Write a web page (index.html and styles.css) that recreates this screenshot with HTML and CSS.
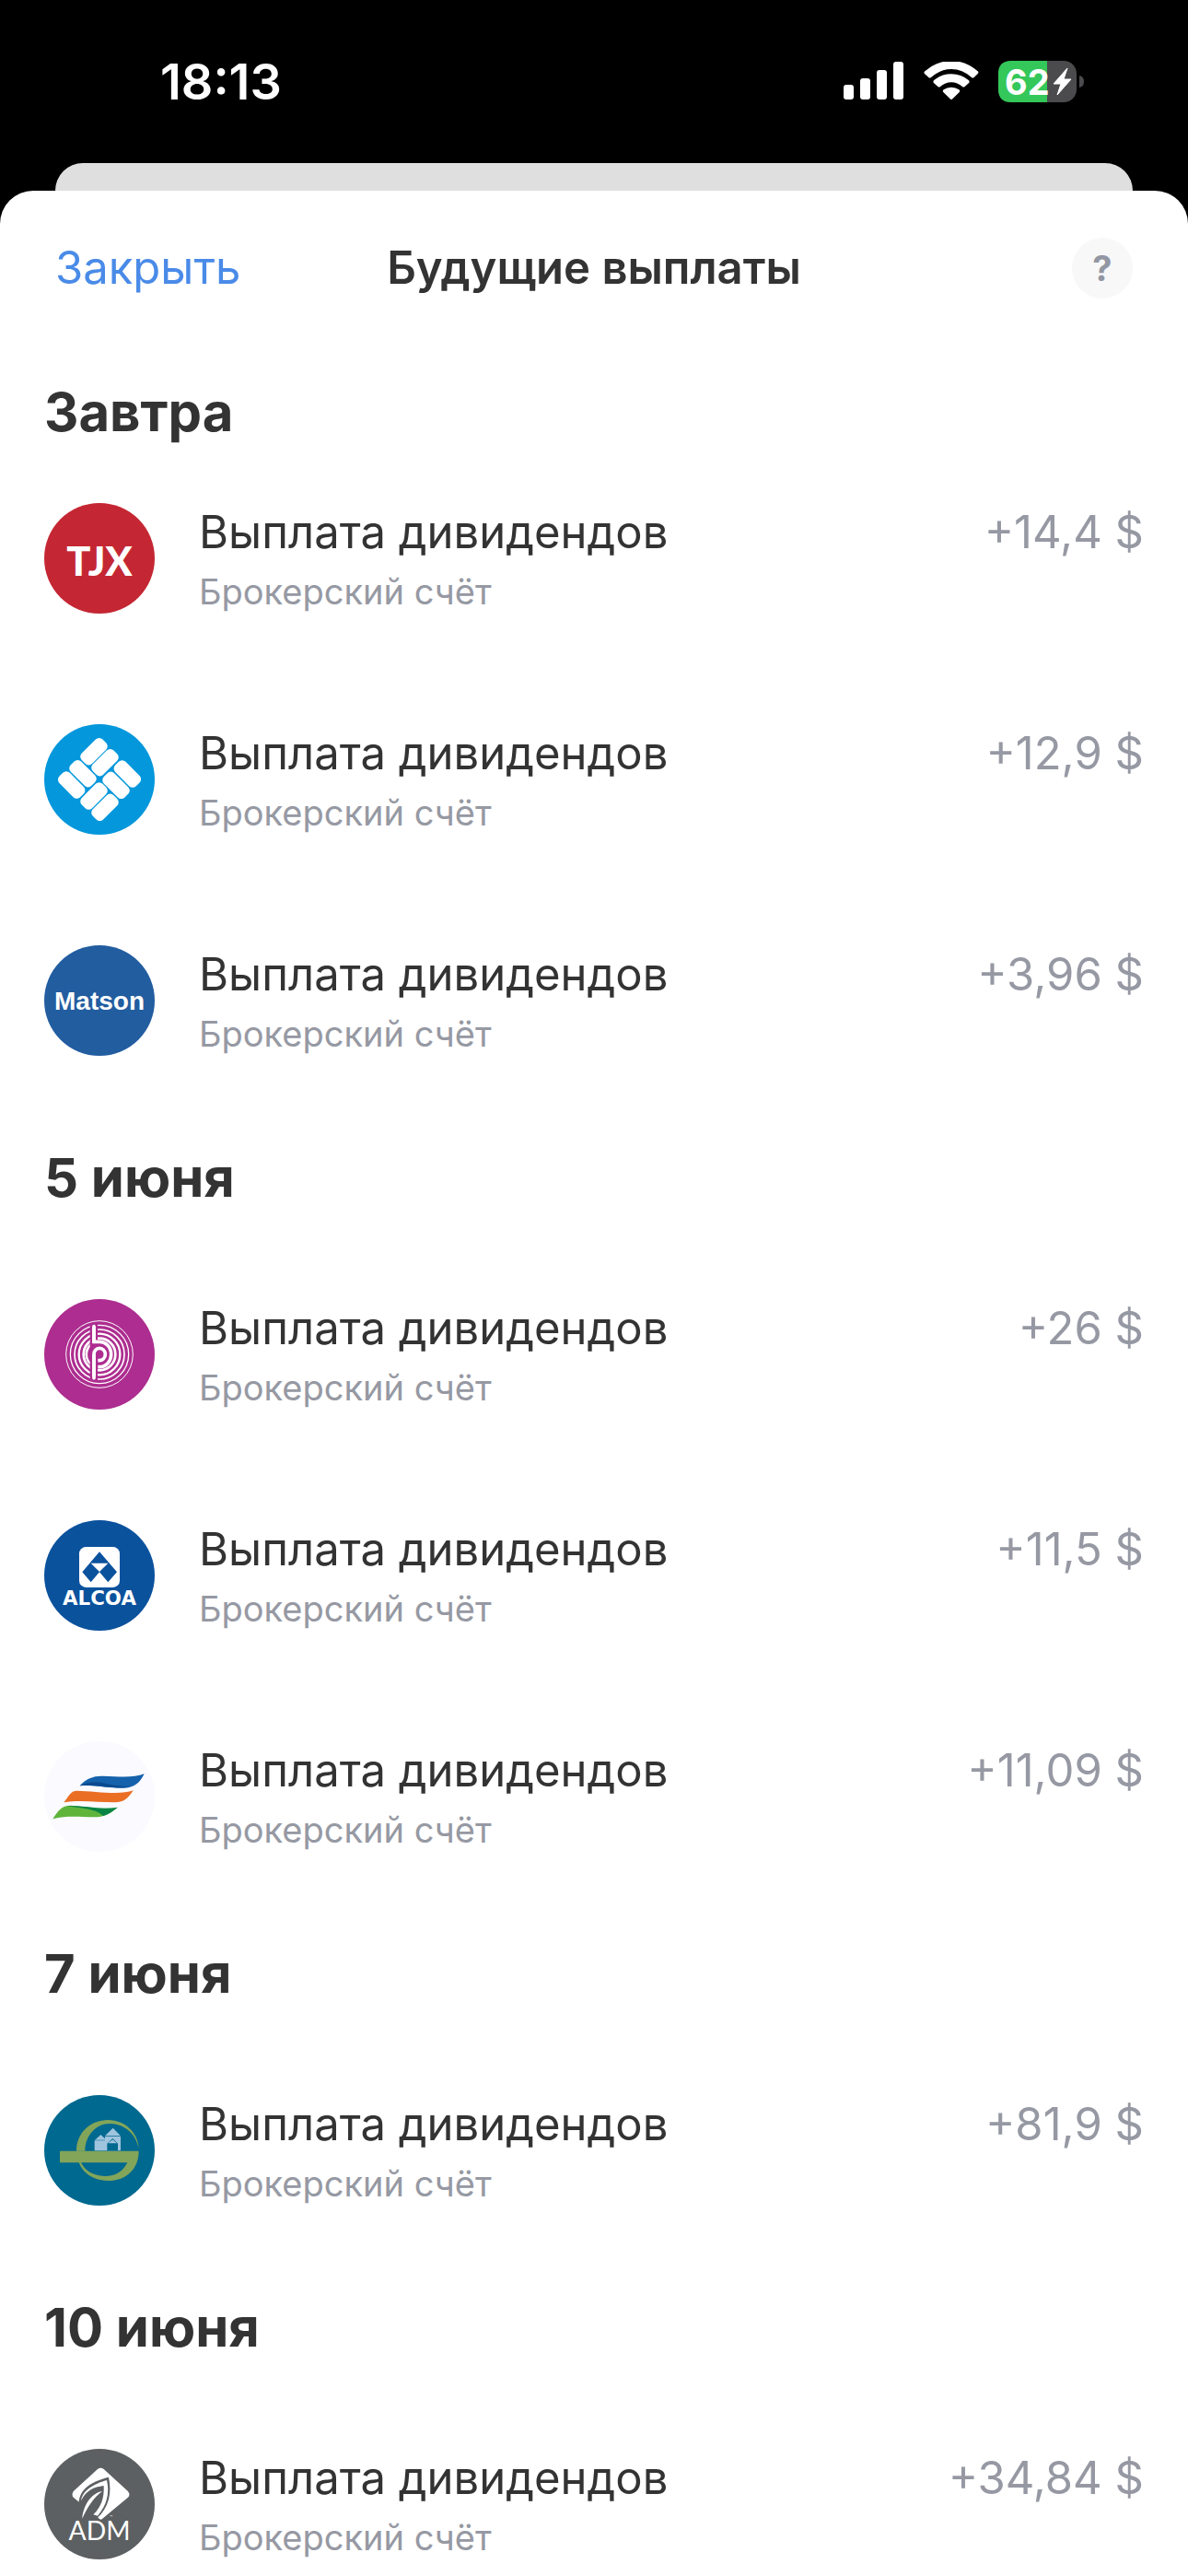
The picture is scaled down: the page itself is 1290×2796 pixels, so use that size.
FILE: index.html
```
<!DOCTYPE html>
<html lang="ru">

<head>
    <meta charset="UTF-8">
    <meta name="viewport" content="width=device-width, initial-scale=1.0">
    <title>Будущие выплаты</title>
    <link rel="stylesheet" href="styles.css">
</head>

<body>
    <div class="status">
        <span class="time">18:13</span>
        <div class="indicators">
            <svg width="66" height="44" viewBox="0 0 66 44" fill="#fff">
                <rect x="0" y="25" width="11" height="16" rx="3" />
                <rect x="18" y="18" width="11" height="23" rx="3" />
                <rect x="36" y="9" width="11" height="32" rx="3" />
                <rect x="54" y="0" width="11" height="41" rx="3" />
            </svg>
            <svg width="60" height="44" viewBox="0 0 180 132" fill="#fff">
                <path d="M2 38Q0 34 4 31Q43 -3 90 -3Q137 -3 176 31Q180 34 177 38L164 51Q160 54 156 51Q126 24 90 24Q54 24 24 51Q19 54 16 51Z" />
                <path d="M32 68Q30 64 33 61Q58 40 90 40Q122 40 147 61Q150 64 148 68L134 81Q130 84 126 81Q110 67 90 67Q70 67 54 81Q50 84 46 81Z" />
                <path d="M63 98Q61 94 65 91Q76 83 90 83Q104 83 115 91Q119 94 117 98L94 121Q90 125 86 121Z" />
            </svg>
            <svg width="94" height="46" viewBox="0 0 94 46">
                <rect width="85" height="45" rx="14" fill="#4b4b4d" />
                <path d="M14 0H53V45H14Q0 45 0 31V14Q0 0 14 0Z" fill="#34c759" />
                <path d="M88 16Q93 17 93 22.500Q93 28 88 29Z" fill="#4b4b4d" />
                <text x="7" y="37" class="charge">62</text>
                <path d="M75 8L60 25H68L64 37L79 20H71Z" fill="#fff" stroke="#fff" stroke-linejoin="round" />
            </svg>
        </div>
    </div>
    <div class="behind"></div>

    <div class="sheet">
        <header class="toolbar">
            <button class="close">Закрыть</button>
            <h1>Будущие выплаты</h1>
            <button class="help">?</button>
        </header>

        <section>
            <h2 class="first">Завтра</h2>
            <div class="row">
                <svg class="logo" viewBox="54 48 360 360">
                    <circle cx="234" cy="228" r="180" fill="#c42733" />
                    <text x="234" y="285" class="tjx">TJX</text>
                </svg>
                <div class="info">
                    <p class="name">Выплата дивидендов</p>
                    <p class="account">Брокерский счёт</p>
                </div>
                <span class="amount">+14,4 $</span>
            </div>
            <div class="row">
                <svg class="logo" viewBox="54 48 360 360">
                    <circle cx="234" cy="228" r="180" fill="#0497dc" />
                    <g fill="#fff">
                        <rect x="-48" y="-24" width="96" height="48" rx="16" transform="translate(216 137) rotate(-45)" />
                        <rect x="-48" y="-24" width="96" height="48" rx="16" transform="translate(252 173) rotate(-45)" />
                        <rect x="-48" y="-24" width="96" height="48" rx="16" transform="translate(180 209) rotate(45)" />
                        <rect x="-48" y="-24" width="96" height="48" rx="16" transform="translate(143 246) rotate(45)" />
                        <rect x="-48" y="-24" width="96" height="48" rx="16" transform="translate(325 210) rotate(45)" />
                        <rect x="-48" y="-24" width="96" height="48" rx="16" transform="translate(288 247) rotate(45)" />
                        <rect x="-48" y="-24" width="96" height="48" rx="16" transform="translate(216 282) rotate(-45)" />
                        <rect x="-48" y="-24" width="96" height="48" rx="16" transform="translate(252 319) rotate(-45)" />
                    </g>
                </svg>
                <div class="info">
                    <p class="name">Выплата дивидендов</p>
                    <p class="account">Брокерский счёт</p>
                </div>
                <span class="amount">+12,9 $</span>
            </div>
            <div class="row">
                <svg class="logo" viewBox="54 48 360 360">
                    <circle cx="234" cy="228" r="180" fill="#225da0" />
                    <text x="234" y="259" class="matson">Matson</text>
                </svg>
                <div class="info">
                    <p class="name">Выплата дивидендов</p>
                    <p class="account">Брокерский счёт</p>
                </div>
                <span class="amount">+3,96 $</span>
            </div>
        </section>

        <section>
            <h2>5 июня</h2>
            <div class="row">
                <svg class="logo" viewBox="54 45 360 360">
                    <circle cx="234" cy="225" r="180" fill="#ad2d90" />
                    <g fill="none" stroke="#fff">
                        <circle cx="234" cy="225" r="95" stroke-width="4" />
                        <circle cx="234" cy="225" r="81" stroke-width="5" />
                        <circle cx="234" cy="225" r="67" stroke-width="7" />
                        <circle cx="234" cy="225" r="52" stroke-width="8" />
                        <path d="M216 188A40 40 0 0 0 216 262" stroke-width="8" />
                    </g>
                    <rect x="203" y="125" width="25" height="184" fill="#ad2d90" />
                    <g fill="none" stroke="#fff">
                        <circle cx="234" cy="225" r="109" stroke-width="3" />
                        <path d="M216 136V184H234A38 41 0 0 1 234 266H229" stroke-width="11" />
                        <path d="M216 298V225A18 20 0 0 1 234 205A19 20 0 0 1 234 245H229" stroke-width="11" />
                        <path d="M216 134V184M216 228V302" stroke-width="11" stroke-linecap="round" />
                    </g>
                </svg>
                <div class="info">
                    <p class="name">Выплата дивидендов</p>
                    <p class="account">Брокерский счёт</p>
                </div>
                <span class="amount">+26 $</span>
            </div>
            <div class="row">
                <svg class="logo" viewBox="54 45 360 360">
                    <circle cx="234" cy="225" r="180" fill="#0b529d" />
                    <rect x="168" y="132" width="132" height="132" rx="22" fill="#fff" />
                    <path d="M234 148L291 214L262 247L234 214L206 247L178 214Z" fill="#0b529d" />
                    <path d="M206 185H262L234 213Z" fill="#fff" />
                    <text x="234" y="320" class="alcoa">ALCOA</text>
                </svg>
                <div class="info">
                    <p class="name">Выплата дивидендов</p>
                    <p class="account">Брокерский счёт</p>
                </div>
                <span class="amount">+11,5 $</span>
            </div>
            <div class="row">
                <svg class="logo" viewBox="54 45 360 360">
                    <circle cx="234" cy="225" r="180" fill="#fafaff" />
                    <path d="M170 190C190 166 215 157 245 158C300 160 345 165 380 151C365 180 350 195 315 197C270 199 215 185 170 190Z" fill="#1561ab" />
                    <path d="M170 190C200 174 230 176 260 184C285 190 310 192 335 193C290 203 225 185 170 190Z" fill="#0a4a8f" />
                    <path d="M118 244C135 222 140 207 160 206C220 207 300 222 344 205C325 235 310 243 285 244C230 244 170 235 118 244Z" fill="#ea6f25" />
                    <path d="M82 298C100 270 110 255 140 254C190 256 240 270 293 260C270 280 250 292 215 292C170 292 130 285 82 298Z" fill="#5fb53c" />
                    <path d="M125 256C190 252 240 270 293 260C275 275 262 283 245 288C225 265 170 262 125 256Z" fill="#0a8444" />
                </svg>
                <div class="info">
                    <p class="name">Выплата дивидендов</p>
                    <p class="account">Брокерский счёт</p>
                </div>
                <span class="amount">+11,09 $</span>
            </div>
        </section>

        <section>
            <h2>7 июня</h2>
            <div class="row">
                <svg class="logo" viewBox="54 42 360 360">
                    <circle cx="234" cy="222" r="180" fill="#00698f" />
                    <g fill="#82a55a">
                        <path d="M159 224C159 165 205 123 262 123C318 123 360 165 362 216C352 167 315 136 268 135C222 135 187 175 187 224Z" />
                        <path d="M105 224H362C362 285 318 321 262 321C215 321 180 297 167 262H105Z" />
                    </g>
                    <path d="M174 262H325C310 290 290 306 250 306C215 305 188 290 174 262Z" fill="#00698f" />
                    <path d="M218 223V190L238 171L252 184V175L278 149L303 175V223Z" fill="#9fc4de" />
                    <path d="M259 223V200L277 183L294 200V223ZM218 188H252V190H218ZM252 174H303V176H252Z" fill="#00698f" />
                    <path d="M262 199L277 187L291 199Z" fill="#9fc4de" />
                </svg>
                <div class="info">
                    <p class="name">Выплата дивидендов</p>
                    <p class="account">Брокерский счёт</p>
                </div>
                <span class="amount">+81,9 $</span>
            </div>
        </section>

        <section>
            <h2>10 июня</h2>
            <div class="row">
                <svg class="logo" viewBox="54 36 360 360">
                    <circle cx="234" cy="216" r="180" fill="#5d6062" />
                    <path d="M228 102Q238 95 248 102L326 173Q337 185 326 195L242 265Q236 269 228 258L150 195Q141 185 150 173Z" fill="#fff" />
                    <path d="M264 128C200 145 165 170 166 222L180 264L226 262C265 225 275 180 264 128Z" fill="#5d6062" />
                    <path d="M258 138C215 150 178 172 174 205C190 172 215 160 248 156C250 195 240 225 214 250L228 254C258 220 268 180 258 138Z" fill="#fff" />
                    <path d="M178 263C180 225 205 180 243 174C215 195 195 225 178 263Z" fill="#fff" />
                    <text x="234" y="333" class="adm">ADM</text>
                    <text x="268" y="263" class="tm">™</text>
                </svg>
                <div class="info">
                    <p class="name">Выплата дивидендов</p>
                    <p class="account">Брокерский счёт</p>
                </div>
                <span class="amount">+34,84 $</span>
            </div>
        </section>
    </div>
</body>

</html>
```
FILE: styles.css
```
body {
    margin: 0;
    background-color: #000;
    color: #333;
    font-family: Inter, "Liberation Sans", sans-serif;
    font-size: 49px;
    line-height: 64px;
}

h1,
h2,
p {
    margin: 0;
}

button {
    padding: 0;
    border: none;
    background: none;
    font: inherit;
    cursor: pointer;
}

.status {
    display: flex;
    justify-content: space-between;
    align-items: center;
    height: 177px;
    padding: 0 112px 0 174px;
    box-sizing: border-box;
}

.time {
    color: #fff;
    font-size: 54px;
    font-weight: 600;
}

.indicators {
    display: flex;
    align-items: center;
    gap: 21px;
}

.charge {
    fill: #fff;
    font-size: 38px;
    font-weight: 700;
}

.behind {
    height: 30px;
    margin: 0 60px;
    background-color: #dfdfdf;
    border-radius: 30px 30px 0 0;
}

.sheet {
    padding: 0 48px;
    background-color: #fff;
    border-radius: 36px 36px 0 0;
}

.toolbar {
    display: grid;
    grid-template-columns: 1fr auto 1fr;
    align-items: center;
    height: 168px;
    padding: 0 12px;
}

.toolbar h1 {
    font-size: 49px;
    font-weight: 600;
}

.close {
    justify-self: start;
    color: #4a8be8;
}

.help {
    justify-self: end;
    width: 66px;
    height: 66px;
    border-radius: 50%;
    background-color: #f8f8f9;
    color: #9297a3;
    font-size: 38px;
    font-weight: 700;
}

h2 {
    padding: 36px 0;
    font-size: 58px;
    line-height: 72px;
    font-weight: 700;
}

h2.first {
    padding-bottom: 3px;
}

.row {
    display: flex;
    align-items: flex-start;
    padding: 60px 0;
}

section:last-child .row {
    padding-bottom: 18px;
}

.logo {
    width: 120px;
    height: 120px;
    margin-right: 48px;
    flex-shrink: 0;
}

.info {
    flex: 1;
}

.account {
    margin-top: 8px;
    color: #9699a3;
    font-size: 38px;
    line-height: 48px;
}

.amount {
    color: #9699a3;
    white-space: nowrap;
}

/* logo lettering */
.tjx {
    fill: #fff;
    font-family: Lato, sans-serif;
    font-size: 130px;
    font-weight: 900;
    text-anchor: middle;
}

.matson {
    fill: #fff;
    font-family: "Liberation Sans", sans-serif;
    font-size: 84px;
    font-weight: 700;
    text-anchor: middle;
}

.alcoa {
    fill: #fff;
    font-family: "DejaVu Sans", sans-serif;
    font-size: 64px;
    font-weight: 700;
    text-anchor: middle;
}

.adm {
    fill: #fff;
    font-family: Lato, sans-serif;
    font-size: 85px;
    text-anchor: middle;
}

.tm {
    fill: #fff;
    font-size: 14px;
}
```
